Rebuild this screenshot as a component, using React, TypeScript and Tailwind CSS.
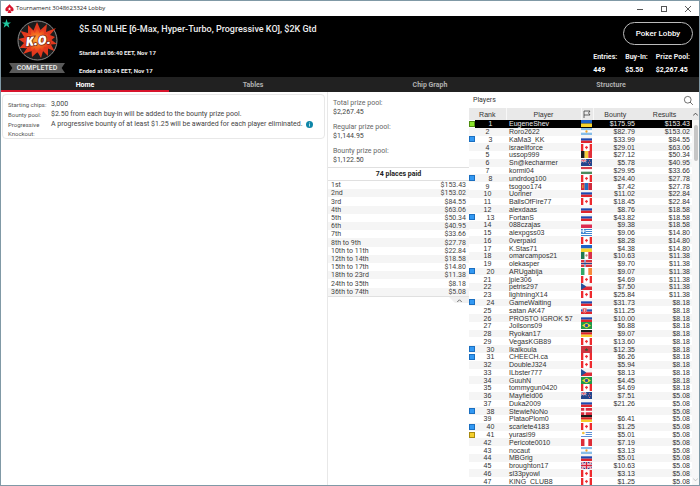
import React from 'react';
import { IoSearchOutline } from 'react-icons/io5';

type playerRow = {
  name: string;
  flag: string;
  bounty: string;
  result: string;
  marker?: 'green' | 'blue' | 'yellow';
};

const players: playerRow[] = [
  { name: 'EugeneShev', flag: 'ua', bounty: '$175.95', result: '$153.43', marker: 'green' },
  { name: 'Roro2622', flag: 'ar', bounty: '$82.79', result: '$153.02' },
  { name: 'KaMa3_KK', flag: 'ru', bounty: '$33.99', result: '$84.55', marker: 'blue' },
  { name: 'israeliforce', flag: 'ca', bounty: '$29.01', result: '$63.06' },
  { name: 'ussop999', flag: 'be', bounty: '$27.12', result: '$50.34' },
  { name: 'Sn@kecharmer', flag: 'nz', bounty: '$5.78', result: '$40.95' },
  { name: 'kormi04', flag: 'hu', bounty: '$29.95', result: '$33.66' },
  { name: 'undrdog100', flag: 'ca', bounty: '$24.40', result: '$27.78', marker: 'blue' },
  { name: 'tsogoo174', flag: 'mn', bounty: '$7.42', result: '$27.78' },
  { name: 'Uoriner', flag: 'ru', bounty: '$11.02', result: '$22.84' },
  { name: 'BallsOfFire77', flag: 'ca', bounty: '$18.45', result: '$22.84' },
  { name: 'alexdaas', flag: 'ru', bounty: '$8.76', result: '$18.58' },
  { name: 'FortanS', flag: 'ru', bounty: '$43.82', result: '$18.58', marker: 'blue' },
  { name: '088czajas', flag: 'pl', bounty: '$9.38', result: '$18.58' },
  { name: 'alexpgss03', flag: 'gr', bounty: '$9.06', result: '$14.80' },
  { name: '0verpaid', flag: 'ca', bounty: '$8.28', result: '$14.80' },
  { name: 'K.Stas71', flag: 'ua', bounty: '$4.38', result: '$14.80' },
  { name: 'omarcampos21', flag: 'mx', bounty: '$10.63', result: '$11.38' },
  { name: 'olekasper', flag: 'no', bounty: '$9.70', result: '$11.38' },
  { name: 'ARUgabija', flag: 'ie', bounty: '$9.07', result: '$11.38', marker: 'blue' },
  { name: 'jpie306', flag: 'ca', bounty: '$4.69', result: '$11.38' },
  { name: 'petris297', flag: 'cz', bounty: '$7.50', result: '$11.38' },
  { name: 'lightningX14', flag: 'ca', bounty: '$25.84', result: '$11.38' },
  { name: 'GameWaiting', flag: 'ru', bounty: '$31.73', result: '$8.18', marker: 'blue' },
  { name: 'satan AK47', flag: 'sk', bounty: '$11.25', result: '$8.18' },
  { name: 'PROSTO IGROK 57', flag: 'ru', bounty: '$10.00', result: '$8.18' },
  { name: 'Joilsons09', flag: 'br', bounty: '$6.88', result: '$8.18' },
  { name: 'Ryokan17', flag: 'de', bounty: '$9.07', result: '$8.18' },
  { name: 'VegasKGB89', flag: 'ca', bounty: '$13.60', result: '$8.18' },
  { name: 'Ikalkoula', flag: 'ma', bounty: '$12.35', result: '$8.18', marker: 'blue' },
  { name: 'CHEECH.ca', flag: 'ca', bounty: '$6.26', result: '$8.18', marker: 'blue' },
  { name: 'DoubleJ324', flag: 'ca', bounty: '$5.94', result: '$8.18' },
  { name: 'ILbster777', flag: 'cz', bounty: '$8.13', result: '$8.18' },
  { name: 'GuuhN', flag: 'br', bounty: '$4.45', result: '$8.18' },
  { name: 'tommygun0420', flag: 'ca', bounty: '$4.69', result: '$8.18' },
  { name: 'Mayfield06', flag: 'nz', bounty: '$7.51', result: '$5.08' },
  { name: 'Duka2009', flag: 'ru', bounty: '$21.26', result: '$5.08' },
  { name: 'StewieNoNo', flag: 'dk', bounty: '', result: '$5.08', marker: 'blue' },
  { name: 'PlataoPlom0', flag: 'de', bounty: '$6.41', result: '$5.08' },
  { name: 'scarlete4183', flag: 'ca', bounty: '$1.25', result: '$5.08', marker: 'blue' },
  { name: 'yurasi99', flag: 'uy', bounty: '$5.01', result: '$5.08', marker: 'yellow' },
  { name: 'Pericote0010', flag: 'pe', bounty: '$7.19', result: '$5.08' },
  { name: 'nocaut', flag: 'ar', bounty: '$3.13', result: '$5.08' },
  { name: 'MBGrig', flag: 'ru', bounty: '$5.01', result: '$5.08' },
  { name: 'broughton17', flag: 'gb', bounty: '$10.63', result: '$5.08' },
  { name: 'sl33pyowl', flag: 'ca', bounty: '$3.13', result: '$5.08' },
  { name: 'KING_CLUB8', flag: 'ca', bounty: '$1.25', result: '$5.08' },
];

const places = [
  ['1st', '$153.43'],
  ['2nd', '$153.02'],
  ['3rd', '$84.55'],
  ['4th', '$63.06'],
  ['5th', '$50.34'],
  ['6th', '$40.95'],
  ['7th', '$33.66'],
  ['8th to 9th', '$27.78'],
  ['10th to 11th', '$22.84'],
  ['12th to 14th', '$18.58'],
  ['15th to 17th', '$14.80'],
  ['18th to 23rd', '$11.38'],
  ['24th to 35th', '$8.18'],
  ['36th to 74th', '$5.08'],
];

const pools = [
  ['Total prize pool:', '$2,267.45'],
  ['Regular prize pool:', '$1,144.95'],
  ['Bounty prize pool:', '$1,122.50'],
];

const stats = [
  ['Entries:', '449'],
  ['Buy-In:', '$5.50'],
  ['Prize Pool:', '$2,267.45'],
];

const markerColors = {
  green: 'bg-[#8ce62e] border-[#4f8f10]',
  blue: 'bg-[#3399f3] border-[#1b6fc0]',
  yellow: 'bg-[#f5cf2c] border-[#a88a10]',
};

// stripes run over a 33 x 21 box
const horizontal = (colors: string[]) =>
  colors.map((c, i) => (
    <rect key={i} y={(i * 21) / colors.length} width="33" height={21 / colors.length} fill={c} />
  ));
const vertical = (colors: string[]) =>
  colors.map((c, i) => (
    <rect key={i} x={(i * 33) / colors.length} width={33 / colors.length} height="21" fill={c} />
  ));

const unionJack = (
  <>
    <rect width="33" height="21" fill="#2b3f8f" />
    <path d="M0 0L33 21M33 0L0 21" stroke="#fff" strokeWidth="5" />
    <path d="M0 0L33 21M33 0L0 21" stroke="#d8304a" strokeWidth="2" />
    <path d="M16.5 0V21M0 10.5H33" stroke="#fff" strokeWidth="7" />
    <path d="M16.5 0V21M0 10.5H33" stroke="#d8203a" strokeWidth="4" />
  </>
);

const flags: Record<string, React.ReactNode> = {
  ua: horizontal(['#1d63c8', '#f7d32c']),
  ar: (
    <>
      {horizontal(['#86bde8', '#fff', '#86bde8'])}
      <circle cx="16.5" cy="10.5" r="3.5" fill="#f0a32a" />
    </>
  ),
  ru: horizontal(['#f4f4f4', '#1c49b0', '#e0252c']),
  ca: (
    <>
      <rect width="33" height="21" fill="#fff" />
      <path d="M0 0H7V21H0ZM26 0H33V21H26Z" fill="#ee2a2e" />
      <path d="M16.5 5L18.5 8L21 8L20.5 12L17.5 13.5V16H15.5V13.5L12.5 12L12 8L14.5 8Z" fill="#ee2a2e" />
    </>
  ),
  be: vertical(['#1b1b1b', '#f6cf3b', '#e0303a']),
  nz: (
    <>
      <rect width="33" height="21" fill="#23468c" />
      <path d="M0 0L16 10M16 0L0 10" stroke="#fff" strokeWidth="2" />
      <path d="M8 0V10M0 5H16" stroke="#fff" strokeWidth="4" />
      <path d="M8 0V10M0 5H16" stroke="#d8304a" strokeWidth="2" />
      <path d="M24 4H27V7H24ZM21 10H24V13H21ZM28 9H30V12H28ZM24 15H27V18H24Z" fill="#d96a80" />
    </>
  ),
  hu: horizontal(['#d4404c', '#fff', '#4a8a5a']),
  mn: (
    <>
      {vertical(['#d02a3c', '#2470c0', '#d02a3c'])}
      <path d="M4 5H7V16H4Z" fill="#f2b92c" />
    </>
  ),
  pl: horizontal(['#f6f6f6', '#dd2c50']),
  gr: (
    <>
      {horizontal(['#3f86d0', '#fff', '#3f86d0', '#fff', '#3f86d0', '#fff', '#3f86d0'])}
      <rect width="14" height="12" fill="#3f86d0" />
      <path d="M7 0V12M0 6H14" stroke="#fff" strokeWidth="3" />
    </>
  ),
  mx: (
    <>
      {vertical(['#1d7a50', '#fff', '#d8304a'])}
      <circle cx="16.5" cy="10.5" r="3.5" fill="#a9906a" />
    </>
  ),
  no: (
    <>
      <rect width="33" height="21" fill="#d9343f" />
      <path d="M12 0V21M0 10.5H33" stroke="#fff" strokeWidth="6" />
      <path d="M12 0V21M0 10.5H33" stroke="#26498f" strokeWidth="3" />
    </>
  ),
  ie: vertical(['#2fa866', '#fff', '#f58a3a']),
  cz: (
    <>
      {horizontal(['#f4f4f4', '#dd2c38'])}
      <path d="M0 0L16 10.5L0 21Z" fill="#24509a" />
    </>
  ),
  sk: (
    <>
      {horizontal(['#f4f4f4', '#2456b8', '#e0252c'])}
      <path d="M5 4H17V12Q16 16 11 18Q6 16 5 12Z" fill="#e0303a" stroke="#fff" strokeWidth="1" />
      <path d="M11 6V15M8 9H14" stroke="#fff" strokeWidth="2" />
    </>
  ),
  br: (
    <>
      <rect width="33" height="21" fill="#229a4a" />
      <path d="M16.5 2L30 10.5L16.5 19L3 10.5Z" fill="#f5dc34" />
      <circle cx="16.5" cy="10.5" r="5" fill="#2a4fa0" />
    </>
  ),
  de: horizontal(['#1b1b1b', '#dd2227', '#f7cb2c']),
  ma: (
    <>
      <rect width="33" height="21" fill="#cf3540" />
      <path d="M16.5 5L18 9H22L19 12L20 16L16.5 13.5L13 16L14 12L11 9H15Z" fill="#2f5a34" />
    </>
  ),
  dk: (
    <>
      <rect width="33" height="21" fill="#dc2c40" />
      <path d="M12 0V21M0 10.5H33" stroke="#fff" strokeWidth="4" />
    </>
  ),
  uy: (
    <>
      {horizontal(['#fff', '#5b8fd4', '#fff', '#5b8fd4', '#fff', '#5b8fd4', '#fff'])}
      <rect width="14" height="12" fill="#fff" />
      <circle cx="7" cy="6" r="4" fill="#f2c23a" />
    </>
  ),
  pe: vertical(['#dc2c36', '#fff', '#dc2c36']),
  gb: unionJack,
};

const Flag = ({ code }: { code: string }): JSX.Element => (
  <svg viewBox="0 0 33 21" preserveAspectRatio="none" className="block w-[11px] h-[7px]">
    {flags[code]}
  </svg>
);

const TitleBar = (): JSX.Element => (
  <div className="h-[15px] flex items-center bg-white pl-1 pr-2 font-['Open_Sans',sans-serif] text-[6px] text-[#222]">
    <svg viewBox="0 0 24 24" className="w-[9px] h-[9px] mr-[2px]">
      <path
        d="M12 0C14 5 23 9 23 15C23 19 18 21 15 18L17 24H7L9 18C6 21 1 19 1 15C1 9 10 5 12 0Z"
        fill="#d8142c"
      />
      <path d="M12 8L13.5 12H17L14 14L15 18L12 15.5L9 18L10 14L7 12H10.5Z" fill="#fff" />
    </svg>
    <span className="grow">Tournament 3048623324 Lobby</span>
    <div className="flex gap-[18px] items-center">
      <button aria-label="Minimize">
        <svg viewBox="0 0 6 6" className="w-[6px] h-[6px] block">
          <path d="M0 3.5H6" stroke="#555" />
        </svg>
      </button>
      <button aria-label="Maximize">
        <svg viewBox="0 0 6 6" className="w-[6px] h-[6px] block">
          <rect x=".5" y=".5" width="5" height="5" fill="none" stroke="#555" />
        </svg>
      </button>
      <button aria-label="Close">
        <svg viewBox="0 0 6 6" className="w-[6px] h-[6px] block">
          <path d="M0 0L6 6M6 0L0 6" stroke="#333" strokeWidth=".8" />
        </svg>
      </button>
    </div>
  </div>
);

const KnockoutLogo = (): JSX.Element => (
  <svg viewBox="0 0 82 82" className="w-[41px] h-[41px] block">
    <defs>
      <radialGradient id="blast">
        <stop offset="0" stopColor="#ffb43c" />
        <stop offset=".5" stopColor="#f56a20" />
        <stop offset="1" stopColor="#e0301c" />
      </radialGradient>
    </defs>
    <circle cx="41" cy="41" r="39" fill="#1c1c1c" stroke="#8c8c8c" strokeWidth="2" />
    <path
      d="M40 4L47 20L60 8L58 24L78 16L66 30L76 34L69 40L80 48L68 49L75 62L62 57L62 72L52 62L48 76L41 64L30 74L29 62L12 68L20 56L5 56L14 46L3 38L15 35L7 22L22 26L22 10L33 21Z"
      fill="#e2391e"
    />
    <path
      d="M40 14L45 26L55 17L54 29L68 26L60 35L68 42L60 47L65 56L54 53L52 64L46 56L40 66L35 56L27 64L28 54L15 57L23 47L12 40L23 36L16 27L28 30L28 18L36 26Z"
      fill="url(#blast)"
    />
    <text
      x="42"
      y="50"
      textAnchor="middle"
      transform="rotate(-6 41 41)"
      fill="#fff"
      stroke="#7a1c10"
      strokeWidth="3"
      paintOrder="stroke"
      className="font-['Open_Sans',sans-serif] font-extrabold italic text-[25px]"
    >
      K.O.
    </text>
  </svg>
);

const Header = (): JSX.Element => (
  <div className="bg-black text-[#eee] flex h-[61px]">
    <svg viewBox="0 0 24 24" className="w-[9px] h-[9px] mt-[3px] ml-[1px]">
      <path d="M12 0L15 9H24L17 14L19.5 23L12 17.5L4.5 23L7 14L0 9H9Z" fill="#1fc8a0" />
    </svg>
    <div className="w-[58px] ml-[-3px] pt-[4px] flex flex-col items-center">
      <KnockoutLogo />
      <div className="mt-[2px] w-[56px] h-[10px] bg-[#5a5a5a] text-center font-medium text-[7px] leading-[11px] [clip-path:polygon(0_0,100%_0,94%_50%,100%_100%,0_100%,6%_50%)]">
        COMPLETED
      </div>
    </div>
    <div className="grow ml-[13px]">
      <h1 className="font-medium text-[9px] leading-[12px] mt-[7px]">
        $5.50 NLHE [6-Max, Hyper-Turbo, Progressive KO], $2K Gtd
      </h1>
      <p className="font-bold text-[6px] leading-[8px] mt-[14px]">Started at 06:40 EET, Nov 17</p>
      <p className="font-bold text-[6px] leading-[8px] mt-[10px]">Ended at 08:24 EET, Nov 17</p>
    </div>
    <div className="flex flex-col items-end pt-[6px] pr-[6px]">
      <button className="h-[23px] w-[70px] rounded-full border border-[#bbb] pt-px font-medium text-[8px] text-white">
        Poker Lobby
      </button>
      <dl className="flex gap-[8px] pr-[3px] mt-[7px] font-bold text-[7px] leading-[10px]">
        {stats.map(([label, value]) => (
          <div key={label}>
            <dt>{label}</dt>
            <dd className="mt-[3px] text-white">{value}</dd>
          </div>
        ))}
      </dl>
    </div>
  </div>
);

const Tabs = (): JSX.Element => (
  <nav className="grid grid-cols-[168fr_168fr_186fr_176fr] h-[15px] bg-[#212121] font-bold text-[7px] text-[#b0b0b0]">
    <button className="pt-px text-white shadow-[inset_0_-2px_#d8142c]">Home</button>
    <button className="pt-px">Tables</button>
    <button className="pt-px">Chip Graph</button>
    <button className="pt-px">Structure</button>
  </nav>
);

const Details = (): JSX.Element => (
  <div className="border-r border-[#e8e8e8] pt-[2px] pl-px pr-[2px]">
    <dl className="grid grid-cols-[43px_1fr] border border-[#e8e8e8] rounded-sm px-[5px] pt-[5px] text-[7px] leading-[9px] text-[#444]">
      <dt className="text-[6px] whitespace-nowrap text-[#555]">Starting chips:</dt>
      <dd className="pb-px">3,000</dd>
      <dt className="text-[6px] whitespace-nowrap text-[#555]">Bounty pool:</dt>
      <dd className="pb-px">$2.50 from each buy-in will be added to the bounty prize pool.</dd>
      <dt className="text-[6px] whitespace-nowrap text-[#555]">
        Progressive
        <br />
        Knockout:
      </dt>
      <dd className="flex items-start gap-[3px]">
        A progressive bounty of at least $1.25 will be awarded for each player eliminated.
        <button aria-label="More information">
          <svg viewBox="0 0 14 14" className="w-[7px] h-[7px] block mt-px">
            <circle cx="7" cy="7" r="7" fill="#0e86a8" />
            <path d="M7 3V5M7 6V11" stroke="#fff" strokeWidth="1.5" />
          </svg>
        </button>
      </dd>
    </dl>
  </div>
);

const Prizes = (): JSX.Element => (
  <div className="text-[#444]">
    <dl className="pl-[5px] pt-[6px] pb-[2px] flex flex-col gap-[5px] text-[7px]">
      {pools.map(([label, value]) => (
        <div key={label}>
          <dt className="leading-[10px] text-[#666]">{label}</dt>
          <dd className="leading-[9px]">{value}</dd>
        </div>
      ))}
    </dl>
    <h2 className="border-y border-[#e0e0e0] h-[14px] text-center font-bold text-[7px] leading-[13px] text-[#222]">
      74 places paid
    </h2>
    <table className="w-full h-[116px] text-[7px] leading-[8px] border-b border-[#e0e0e0]">
      <tbody>
        {places.map(([place, prize]) => (
          <tr key={place} className="even:bg-[#f5f5f5]">
            <td className="p-0 pl-[3px]">{place}</td>
            <td className="p-0 pr-[3px] text-right">{prize}</td>
          </tr>
        ))}
      </tbody>
    </table>
    <button
      aria-label="Collapse"
      className="ml-auto flex items-center justify-center w-[20px] h-[6px] bg-[#f0f0f0] [clip-path:polygon(0_0,100%_0,100%_100%,30%_100%)]"
    >
      <svg viewBox="0 0 6 4" className="w-[5px] h-[3px]">
        <path d="M0 4L3 1L6 4" fill="none" stroke="#444" />
      </svg>
    </button>
  </div>
);

const Players = (): JSX.Element => (
  <div className="flex flex-col min-h-0 text-[#333]">
    <div className="h-[16px] shrink-0 flex items-center justify-between pl-[4px] pr-[5px] pt-px">
      <h2 className="text-[7px]">Players</h2>
      <button aria-label="Search players">
        <IoSearchOutline className="w-[11px] h-[11px] block" />
      </button>
    </div>
    <div className="grow min-h-0 flex">
      <div className="grow basis-0 min-h-0 overflow-hidden">
        <table className="table-fixed w-full h-[377px] font-['Liberation_Sans',Arial,sans-serif] text-[7px] leading-[7px]">
          <colgroup>
            <col className="w-[6px]" />
            <col className="w-[31px]" />
            <col />
            <col className="w-[12px]" />
            <col className="w-[44px]" />
            <col className="w-[55px]" />
          </colgroup>
          <thead>
            <tr className="h-[12px] bg-[#e9e9e9]">
              <th colSpan={2} className="p-0 font-normal border-r border-[#f8f8f8]">
                Rank
              </th>
              <th className="p-0 font-normal border-r border-[#f8f8f8]">Player</th>
              <th aria-label="Country" className="p-0 border-r border-[#f8f8f8]">
                <svg viewBox="0 0 16 16" className="w-[8px] h-[8px] block mx-auto">
                  <path d="M2 16V2H14L11 6L14 10H2" fill="none" stroke="#333" strokeWidth="1.5" />
                </svg>
              </th>
              <th className="p-0 font-normal">Bounty</th>
              <th className="p-0 font-normal">Results</th>
            </tr>
          </thead>
          <tbody>
            {players.map((player, index) => (
              <tr
                key={player.name}
                className={index === 0 ? 'bg-black text-[#eee]' : index % 2 ? 'bg-[#f5f5f5]' : ''}
              >
                <td className={index === 0 ? 'p-0 bg-white' : 'p-0'}>
                  {player.marker && (
                    <div className={`w-[6px] h-[6px] border ${markerColors[player.marker]}`} />
                  )}
                </td>
                <td className={`p-0 text-center ${player.marker ? '' : 'pr-[6px]'}`}>
                  {index + 1}
                </td>
                <td className="p-0 pl-[3px] whitespace-nowrap">{player.name}</td>
                <td className="p-0">
                  <Flag code={player.flag} />
                </td>
                <td className="p-0 pr-[2px] text-right">{player.bounty}</td>
                <td className="p-0 pr-[2px] text-right">{player.result}</td>
              </tr>
            ))}
          </tbody>
        </table>
      </div>
      {/* scrollbar */}
      <div className="w-[7px] flex flex-col items-center bg-[#f7f7f7]">
        <div className="h-[12px] w-full bg-[#e9e9e9] flex items-center justify-center">
          <svg viewBox="0 0 6 4" className="w-[5px] h-[4px]">
            <path d="M0 4L3 1L6 4" fill="none" stroke="#333" />
          </svg>
        </div>
        <div className="mt-[5px] w-[4px] h-[36px] rounded-sm bg-[#c6c6c6]" />
        <svg viewBox="0 0 6 4" className="w-[5px] h-[4px] mt-auto mb-[3px]">
          <path d="M0 0L3 3L6 0" fill="none" stroke="#bbb" />
        </svg>
      </div>
    </div>
  </div>
);

const App = (): JSX.Element => (
  <div className="h-screen flex flex-col border border-[#8099a6] bg-white font-['Roboto',sans-serif]">
    <TitleBar />
    <Header />
    <Tabs />
    <main className="grow min-h-0 grid grid-cols-[327fr_141fr_230fr] grid-rows-[minmax(0,1fr)]">
      <Details />
      <Prizes />
      <Players />
    </main>
  </div>
);

export default App;
